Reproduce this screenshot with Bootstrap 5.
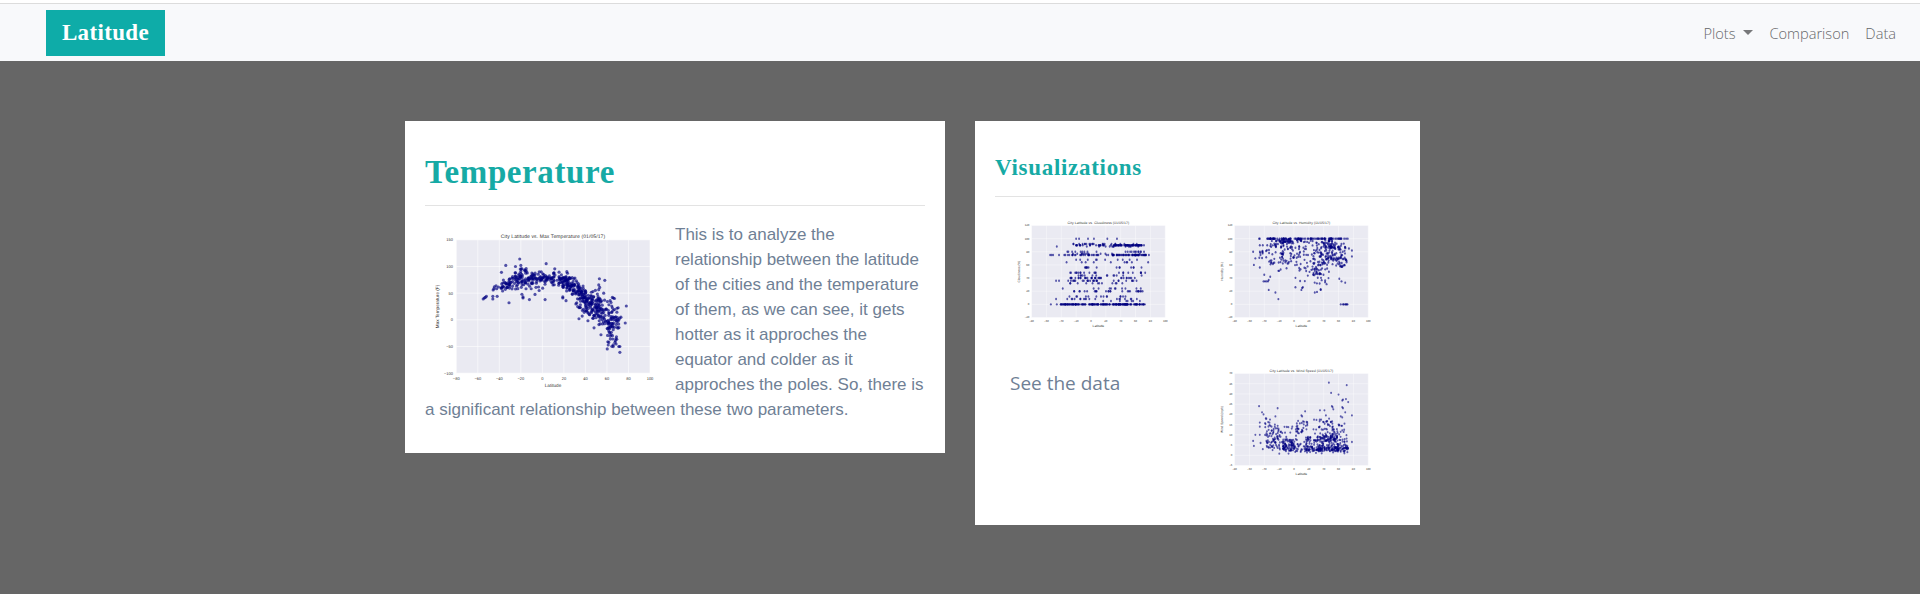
<!DOCTYPE html>
<html lang="en">
<head>
<meta charset="utf-8">
<meta name="viewport" content="width=device-width, initial-scale=1">
<title>Latitude</title>
<link href="https://cdn.jsdelivr.net/npm/bootstrap@5.3.0/dist/css/bootstrap.min.css" rel="stylesheet">
<style>
  body { background: #666; font-family: "Open Sans", "Noto Sans", sans-serif; overflow: hidden; }
  .top-strip { height: 4px; background: #fff; border-bottom: 1px solid #dcdcdc; }
  .site-nav { height: 57px; background: #f8f9fb; padding: 0 16px; }
  .brand-box { margin-left: 30px; width: 119px; height: 46px; margin-top: 1px; padding: 0; background: #0eaca8; color: #fff; font: bold 23px/46px "Liberation Serif", serif; letter-spacing: .35px; text-align: center; }
  .brand-box:hover { color: #fff; }
  .site-nav .nav-link { color: #66676a; font-size: 14.6px; font-weight: 300; line-height: 24px; padding: 8px; white-space: nowrap; }
  .site-nav .dropdown-toggle::after { margin-left: 8px; vertical-align: 4px; border-width: 5px 5px 0; color: #77787a; }
  .page { width: 1140px; margin: 60px auto 0 390px; padding: 0; }
  .page > .row, .thumbs { --bs-gutter-x: 30px; margin-left: 0; margin-right: 0; }
  .panel { background: #fff; padding: 20px; }
  .panel h1, .panel h2 { color: #16aaa5; font-family: "Liberation Serif", serif; font-weight: bold; margin: 0; white-space: nowrap; }
  .panel h1 { font-size: 33px; line-height: 36px; letter-spacing: .6px; padding: 13px 0 15px; }
  .panel h2 { font-size: 23px; line-height: 26px; letter-spacing: .7px; padding: 14px 0 15px; }
  .panel hr { margin: 0; border: 0; height: 1px; background: #e3e3e3; opacity: 1; }
  .panel-main { height: 332px; }
  .panel-side { height: 404px; }
  .story { padding-top: 16px; color: #6f8095; font: 17px/25px "Liberation Sans", Arial, sans-serif; margin: 0; }
  .plot { display: block; width: 100%; aspect-ratio: 3 / 2; }
  .plot-main { float: left; width: 250px; height: 167px; }
  .story .plot-main { margin-top: 1px; }
  .thumb-cell { height: 148px; padding-top: 17px; }
  .see-data { color: #6f8095; font-size: 19px; line-height: 30px; text-decoration: none; display: inline-block; margin-top: 6px; white-space: nowrap; }
  .plot text { font-family: "Liberation Sans", Arial, sans-serif; fill: #333; text-rendering: geometricPrecision; }
</style>
</head>
<body>
<div class="top-strip"></div>
<nav class="navbar navbar-expand site-nav">
  <a class="navbar-brand brand-box" href="#">Latitude</a>
  <ul class="navbar-nav ms-auto">
    <li class="nav-item dropdown"><a class="nav-link dropdown-toggle" href="#" data-bs-toggle="dropdown">Plots</a></li>
    <li class="nav-item"><a class="nav-link" href="#">Comparison</a></li>
    <li class="nav-item"><a class="nav-link" href="#">Data</a></li>
  </ul>
</nav>
<main class="page">
  <div class="row">
    <div class="col-6">
      <section class="panel panel-main">
        <h1>Temperature</h1>
        <hr>
        <div class="story"><svg class="plot plot-main" id="temperature" viewBox="0 0 750 500"></svg>This is to analyze the relationship between the latitude of the cities and the temperature of them, as we can see, it gets hotter as it approches the equator and colder as it approches the poles. So, there is a significant relationship between these two parameters.</div>
      </section>
    </div>
    <div class="col-5">
      <section class="panel panel-side">
        <h2>Visualizations</h2>
        <hr>
        <div class="row thumbs">
          <div class="col-6 thumb-cell"><svg class="plot" id="cloudiness" viewBox="0 0 750 500"></svg></div>
          <div class="col-6 thumb-cell"><svg class="plot" id="humidity" viewBox="0 0 750 500"></svg></div>
          <div class="col-6 thumb-cell"><a class="see-data" href="#">See the data</a></div>
          <div class="col-6 thumb-cell"><svg class="plot" id="wind" viewBox="0 0 750 500"></svg></div>
        </div>
      </section>
    </div>
  </div>
</main>
<script src="https://cdn.jsdelivr.net/npm/bootstrap@5.3.0/dist/js/bootstrap.bundle.min.js"></script>
<script>
  // Repeatable random numbers, so the plots are the same on each load
  let seed = 71;
  const rnd = () => { seed = (seed * 1664525 + 1013904223) >>> 0; return seed / 4294967296; };
  const gauss = () => rnd() + rnd() + rnd() + rnd() + rnd() + rnd() - 3;
  const between = (a, b) => a + rnd() * (b - a);

  function draw(id, title, titleWidth, label, lo, hi, step, points, rx, ry, opacity) {
    const X = v => 93.75 + (v + 80) / 180 * 581.25;
    const Y = v => 450 - (v - lo) / (hi - lo) * 400;
    let s = '<rect x="93.75" y="50" width="581.25" height="400" fill="#eaeaf2"/>';
    for (let v = -80; v <= 100; v += 20) {
      s += `<path d="M${X(v)} 50V450" stroke="#fff" stroke-opacity=".7" stroke-width="2.4"/><text x="${X(v)}" y="469" font-size="12" text-anchor="middle">${String(v).replace('-', '−')}</text>`;
    }
    for (let v = lo; v <= hi; v += step) {
      s += `<path d="M93.75 ${Y(v)}H675" stroke="#fff" stroke-opacity=".7" stroke-width="2.4"/><text x="84" y="${Y(v) + 4}" font-size="12" text-anchor="end">${String(v).replace('-', '−')}</text>`;
    }
    s += `<text x="384" y="43" font-size="15" text-anchor="middle" textLength="${titleWidth}">${title}</text>`;
    s += `<text x="384" y="490" font-size="14" text-anchor="middle">Latitude</text>`;
    s += `<text transform="translate(43 250) rotate(-90)" font-size="14" text-anchor="middle">${label}</text>`;
    s += `<g fill="#000080" fill-opacity="${opacity}">`;
    for (const [x, y] of points) s += `<ellipse cx="${X(x).toFixed(1)}" cy="${Y(y).toFixed(1)}" rx="${rx}" ry="${ry}"/>`;
    document.getElementById(id).innerHTML = s + '</g>';
  }

  // Temperature: flat near the equator, falling towards the north
  const temp = [[-21,114],[-34,102],[-25,100],[-20,102],[-15,96],[-38,89],[-55,39],[-54,41],[-52,44],[-53,42],[-46,44],[-46,39],[-42,44],[-43,64],[-31,32],[-19,48],[-18,43],[-18,41],[-12,38],[-3,55],[19,43],[19,41],[22,36],[53,77],[58,74],[57,50],[78,26],[77,-6],[73,5],[34,2],[37,7],[48,-15],[72,-61],[71,-50],[72,-50],[65,42],[66,41],[67,40],[63,36],[38,59]];
  const knots = [[-47,53],[-40,62],[-30,70],[-20,76],[0,78],[15,78],[20,72],[28,63],[35,45],[42,32],[52,25],[58,8],[66,2]];
  const curve = x => { for (let i = 1; i < knots.length; i++) if (x <= knots[i][0]) { const [a, b] = knots[i - 1], [c, d] = knots[i]; return b + (d - b) * (x - a) / (c - a); } return 0; };
  const addTemp = (n, a, b, sd) => { for (let i = 0; i < n; i++) { const x = between(a, b); temp.push([x, curve(x) + gauss() * sd]); } };
  addTemp(6, -47, -38, 7); addTemp(36, -38, -27, 12); addTemp(70, -27, -10, 13); addTemp(90, -10, 20, 9);
  addTemp(24, -10, 28, 19); addTemp(55, 20, 30, 11); addTemp(85, 30, 42, 19); addTemp(90, 42, 55, 20); addTemp(52, 52, 66, 27);
  for (let i = 0; i < 36; i++) temp.push([between(61, 72), between(-15, 28)]);
  for (let i = 0; i < 28; i++) { const x = between(60, 71); temp.push([x, -22 - (x - 60) * 1.7 + gauss() * 17]); }
  draw('temperature', 'City Latitude vs. Max Temperature (01/05/17)', 313, 'Max Temperature (F)', -100, 150, 50, temp, 4.7, 4.7, .66);

  // Cloudiness: readings gather on a few fixed percentages
  const cloud = [[-20,100],[-16,100],[-4,100],[4,100],[22,100],[35,100],[-46,88],[-55,75],[-53,75],[-51,75],[-43,75],[-47,36],[-43,36],[-47,8],[-54,0],[-46,0],[78,75],[77,64],[-38,24],[73,48]];
  [[92,22,-36,72],[90,20,-26,30],[90,58,30,72],[88,12,-10,70],[80,9,-36,10],[80,12,46,74],[77,12,-28,70],[75,28,-36,30],[75,60,28,74],[68,10,-36,70],[64,9,-36,72],[56,14,-28,70],[48,13,-30,10],[48,8,34,70],[44,14,-22,72],[40,24,-30,14],[40,9,26,62],[36,18,-32,10],[36,8,30,70],[32,12,-30,66],[24,10,-30,70],[20,26,-26,70],[12,14,-34,70],[8,18,-38,72],[5,8,14,70],[0,50,-41,-6],[0,85,-4,48],[0,30,48,73]].forEach(([y, n, a, b]) => { for (let i = 0; i < n; i++) cloud.push([between(a, b), y]); });
  draw('cloudiness', 'City Latitude vs. Cloudiness (01/05/17)', 268, 'Cloudiness (%)', -20, 120, 20, cloud, 4.1, 5.4, .64);

  // Humidity: most readings are near saturation
  const hum = [[-55,80],[-52,70],[-54,60],[-46,56],[-40,45],[-32,42],[-41,35],[-39,35],[-37,35],[-35,35],[-34,37],[-34,22],[-25,18],[-21,8],[2,26],[10,22],[12,26],[11,25],[28,18],[31,19],[36,23],[36,22],[61,39],[64,35],[69,33],[78,82],[78,73],[74,85],[63,0],[66,0],[67,0],[69,0],[70,0],[71,0],[72,0],[-46,100],[-47,100],[-46,90],[-42,90],[-21,51],[-20,51],[-18,53],[-10,55]];
  const addHum = (n, a, b, lo, hi, p) => { for (let i = 0; i < n; i++) hum.push([between(a, b), hi - Math.pow(rnd(), p) * (hi - lo)]); };
  addHum(20, -38, -18, 100, 100, 1); addHum(75, -22, 73, 100, 100, 1); addHum(35, -25, 10, 95, 100, 1);
  addHum(50, -38, -14, 60, 98, 1); addHum(9, -47, -42, 66, 84, 1); addHum(50, -20, -1, 62, 99, 2); addHum(42, -2, 26, 48, 98, 1.3);
  addHum(10, 0, 25, 35, 60, 1); addHum(50, 25, 38, 45, 96, .9); addHum(22, 26, 48, 30, 56, .8); addHum(75, 36, 52, 60, 98, 1.1); addHum(75, 48, 70, 66, 94, 1); addHum(16, 56, 71, 56, 68, .8);
  draw('humidity', 'City Latitude vs. Humidity (01/05/17)', 251, 'Humidity (%)', -20, 120, 20, hum, 4.3, 5.2, .64);

  // Wind speed: dense at low speeds with a thin upper tail
  const wind = [[-47,24],[-43,21],[-41,20],[-46,16],[-46,14],[-55,7],[-54,4.6],[-52,10],[-46,10],[-45,6],[-42,3],[-22,23],[-25,19],[-38,18],[15,21.5],[10,19.5],[11,19],[35,22],[41,22],[47,35.5],[71,34.3],[50,30.5],[60,29.7],[70,27.5],[66,27.2],[65,26.8],[73,26],[51,24],[52,23.5],[53,22.5],[65,23.5],[66,23],[69,21],[78,19.5],[78,6.5],[63,19],[65,18.5],[43,19.5]];
  const addWind = (n, a, b, lo, hi, p) => { for (let i = 0; i < n; i++) wind.push([between(a, b), lo + Math.pow(rnd(), p) * (hi - lo)]); };
  addWind(32, -39, -31, 3, 18, .9); addWind(54, -31, -19, 2, 15, 1.1); addWind(85, -15, 1, 1.8, 8, 1.1); addWind(22, -19, 5, 5, 14, 1.2);
  addWind(22, 0, 16, 1.5, 7, 1); addWind(28, 3, 18, 10, 17, 1); addWind(90, 16, 38, 2, 9, 1.4); addWind(105, 36, 60, 2, 10, 1.2);
  addWind(38, 58, 72, 1.5, 7, 1); addWind(75, 26, 56, 7, 18, 1.5); addWind(32, 50, 72, 7, 16, 1.2); addWind(50, 15, 73, 2.5, 4, 1); addWind(10, -25, 72, .5, 2, 1);
  draw('wind', 'City Latitude vs. Wind Speed (01/05/17)', 276, 'Wind Speed (mph)', -5, 40, 5, wind, 4.3, 5, .6);
</script>
</body>
</html>
